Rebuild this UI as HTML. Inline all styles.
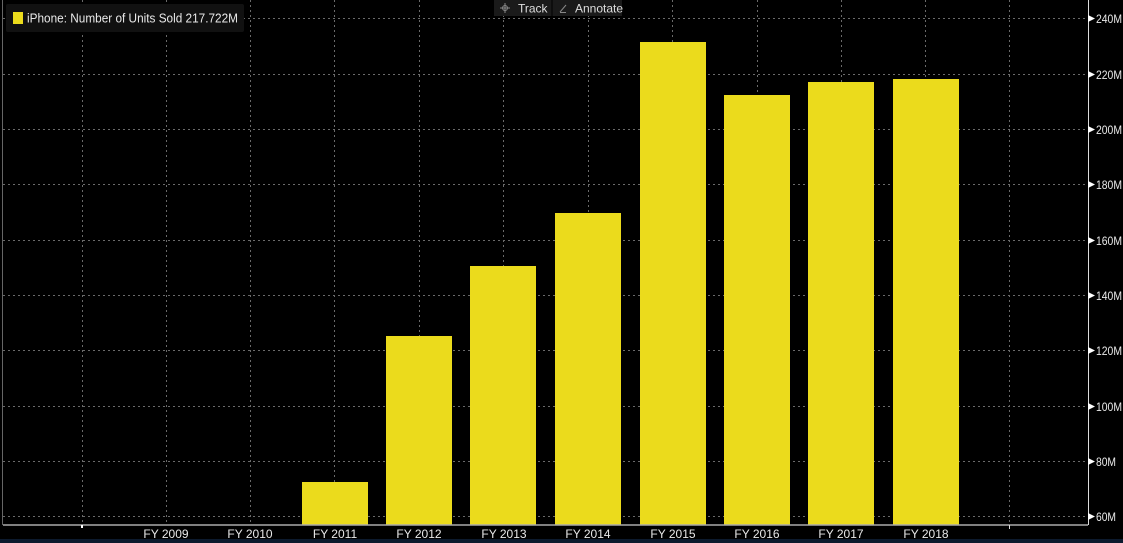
<!DOCTYPE html>
<html><head><meta charset="utf-8"><style>
html,body{margin:0;padding:0;background:#000;width:1123px;height:543px;overflow:hidden}
svg{display:block;font-family:"Liberation Sans",sans-serif}
</style></head><body>
<svg width="1123" height="543" viewBox="0 0 1123 543">
<rect width="1123" height="543" fill="#000"/>
<rect x="0" y="539" width="1123" height="4" fill="#0c1a2e"/>
<line x1="2.5" y1="0" x2="2.5" y2="525" stroke="#666" stroke-width="1"/>
<g stroke="#6a6a6a" stroke-width="1" stroke-dasharray="2,3">
<line x1="3" y1="18.5" x2="1087" y2="18.5"/>
<line x1="3" y1="74.5" x2="1087" y2="74.5"/>
<line x1="3" y1="129.5" x2="1087" y2="129.5"/>
<line x1="3" y1="184.5" x2="1087" y2="184.5"/>
<line x1="3" y1="240.5" x2="1087" y2="240.5"/>
<line x1="3" y1="295.5" x2="1087" y2="295.5"/>
<line x1="3" y1="350.5" x2="1087" y2="350.5"/>
<line x1="3" y1="406.5" x2="1087" y2="406.5"/>
<line x1="3" y1="461.5" x2="1087" y2="461.5"/>
<line x1="3" y1="516.5" x2="1087" y2="516.5"/>
<line x1="82.5" y1="0" x2="82.5" y2="525"/>
<line x1="166.5" y1="0" x2="166.5" y2="525"/>
<line x1="250.5" y1="0" x2="250.5" y2="525"/>
<line x1="334.5" y1="0" x2="334.5" y2="525"/>
<line x1="419.5" y1="0" x2="419.5" y2="525"/>
<line x1="503.5" y1="0" x2="503.5" y2="525"/>
<line x1="588.5" y1="0" x2="588.5" y2="525"/>
<line x1="672.5" y1="0" x2="672.5" y2="525"/>
<line x1="757.5" y1="0" x2="757.5" y2="525"/>
<line x1="841.5" y1="0" x2="841.5" y2="525"/>
<line x1="925.5" y1="0" x2="925.5" y2="525"/>
<line x1="1009.5" y1="0" x2="1009.5" y2="525"/>
</g>
<g fill="#ebdb1c">
<rect x="302" y="482" width="66" height="43"/>
<rect x="386" y="336" width="66" height="189"/>
<rect x="470" y="266" width="66" height="259"/>
<rect x="555" y="213" width="66" height="312"/>
<rect x="640" y="42" width="66" height="483"/>
<rect x="724" y="95" width="66" height="430"/>
<rect x="808" y="82" width="66" height="443"/>
<rect x="893" y="79" width="66" height="446"/>
</g>
<line x1="3" y1="525" x2="1088" y2="525" stroke="#aaa" stroke-width="1.5"/>
<line x1="1088.5" y1="0" x2="1088.5" y2="525" stroke="#ddd" stroke-width="1"/>
<rect x="81" y="525" width="2" height="3" fill="#fff"/>
<rect x="1009" y="525" width="1" height="4" fill="#ddd"/>
<g fill="#fff">
<polygon points="1088,15 1095,18.5 1088,22"/><polygon points="1088,71 1095,74.5 1088,78"/>
<polygon points="1088,126 1095,129.5 1088,133"/><polygon points="1088,181 1095,184.5 1088,188"/>
<polygon points="1088,237 1095,240.5 1088,244"/><polygon points="1088,292 1095,295.5 1088,299"/>
<polygon points="1088,347 1095,350.5 1088,354"/><polygon points="1088,403 1095,406.5 1088,410"/>
<polygon points="1088,458 1095,461.5 1088,465"/><polygon points="1088,513 1095,516.5 1088,520"/>
</g>
<g fill="#e8e8e8" font-size="12" lengthAdjust="spacingAndGlyphs">
<text x="1096" y="23" textLength="26" lengthAdjust="spacingAndGlyphs">240M</text><text x="1096" y="79" textLength="26" lengthAdjust="spacingAndGlyphs">220M</text>
<text x="1096" y="134" textLength="26" lengthAdjust="spacingAndGlyphs">200M</text><text x="1096" y="189" textLength="26" lengthAdjust="spacingAndGlyphs">180M</text>
<text x="1096" y="245" textLength="26" lengthAdjust="spacingAndGlyphs">160M</text><text x="1096" y="300" textLength="26" lengthAdjust="spacingAndGlyphs">140M</text>
<text x="1096" y="355" textLength="26" lengthAdjust="spacingAndGlyphs">120M</text><text x="1096" y="411" textLength="26" lengthAdjust="spacingAndGlyphs">100M</text>
<text x="1096" y="466" textLength="20" lengthAdjust="spacingAndGlyphs">80M</text><text x="1096" y="521" textLength="20" lengthAdjust="spacingAndGlyphs">60M</text>
</g>
<g fill="#e8e8e8" font-size="12" text-anchor="middle">
<text x="166" y="538">FY 2009</text><text x="250" y="538">FY 2010</text>
<text x="335" y="538">FY 2011</text><text x="419" y="538">FY 2012</text>
<text x="504" y="538">FY 2013</text><text x="588" y="538">FY 2014</text>
<text x="673" y="538">FY 2015</text><text x="757" y="538">FY 2016</text>
<text x="841" y="538">FY 2017</text><text x="926" y="538">FY 2018</text>
</g>
<rect x="6" y="4" width="238" height="28" rx="2" fill="#111"/>
<rect x="13" y="12" width="10" height="12" fill="#ebdb1c"/>
<text x="27" y="22.5" fill="#e8e8e8" font-size="12.5" textLength="211" lengthAdjust="spacingAndGlyphs">iPhone: Number of Units Sold 217.722M</text>
<rect x="494" y="0" width="128" height="16" fill="#1a1a1a"/>
<line x1="552" y1="0" x2="552" y2="16" stroke="#000"/>
<g stroke="#888" stroke-width="1" fill="none">
<circle cx="505" cy="8" r="2.5"/><line x1="505" y1="3" x2="505" y2="13"/><line x1="500" y1="8" x2="510" y2="8"/>
<line x1="560" y1="12" x2="566" y2="5"/><line x1="560" y1="12.5" x2="566" y2="12.5"/>
</g>
<text x="518" y="12.5" fill="#ddd" font-size="12">Track</text>
<text x="575" y="12.5" fill="#ddd" font-size="12">Annotate</text>
</svg>
</body></html>
